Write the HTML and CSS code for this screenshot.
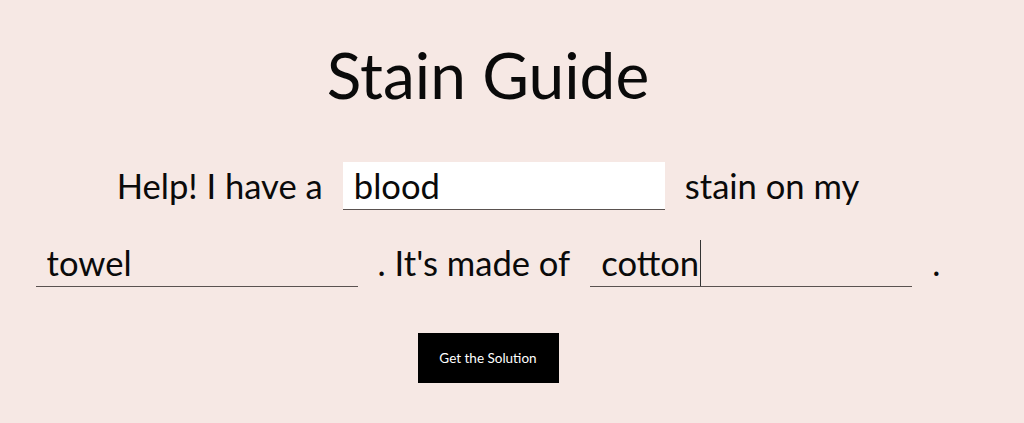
FILE: index.html
```html
<!DOCTYPE html>
<html lang="en">
<head>
<meta charset="utf-8">
<title>Stain Guide</title>
<link rel="stylesheet" href="styles.css">
</head>
<body>
<main class="page">
  <h1 class="title">Stain Guide</h1>
  <form class="sentence">
    <div class="row">
      <span class="words">Help! I have a</span>
      <input class="field field-filled" type="text" value="blood">
      <span class="words">stain on my</span>
    </div>
    <div class="row">
      <input class="field" type="text" value="towel">
      <span class="words">. It's made of</span>
      <span class="field-wrap">
        <input class="field" type="text" value="cotton">
        <span class="caret-mirror" aria-hidden="true"><span class="ghost">cotton</span><span class="caret"></span></span>
      </span>
      <span class="words">.</span>
    </div>
    <div class="actions">
      <button class="submit" type="button">Get the Solution</button>
    </div>
  </form>
</main>
</body>
</html>
```
FILE: styles.css
```css
html, body {
  margin: 0;
  padding: 0;
}
body {
  background: #f6e8e4;
  color: #0a0a0a;
  font-family: "Lato", "Noto Sans", sans-serif;
  height: 423px;
  overflow: hidden;
}
.page {
  width: 976px;
  padding-top: 35px;
}
.title {
  margin: 0;
  text-align: center;
  font-weight: 400;
  font-size: 64px;
  line-height: 80px;
}
.sentence {
  margin-top: 47px;
}
.row {
  display: flex;
  justify-content: center;
  align-items: baseline;
  gap: 20px;
  height: 48px;
  margin-bottom: 29px;
}
.words {
  font-size: 34.6px;
  line-height: 48px;
}
.field {
  box-sizing: border-box;
  width: 322px;
  height: 48px;
  margin: 0;
  padding: 0 0 0 11px;
  border: 0;
  border-bottom: 1px solid #5a5250;
  border-radius: 0;
  background: transparent;
  font-family: inherit;
  font-size: 34.6px;
  color: #0a0a0a;
  outline: none;
}
.field-filled {
  background: #ffffff;
}
.field-wrap {
  position: relative;
  display: inline-block;
}
.caret-mirror {
  position: absolute;
  left: 11px;
  top: 1px;
  height: 46px;
  display: flex;
  align-items: stretch;
  font-size: 34.6px;
  line-height: 46px;
  pointer-events: none;
}
.ghost {
  visibility: hidden;
  white-space: pre;
}
.caret {
  width: 1px;
  margin-left: 1px;
  background: #333;
}
.actions {
  display: flex;
  justify-content: center;
  margin-top: 46px;
}
.submit {
  width: 141px;
  height: 50px;
  border: 0;
  background: #000;
  color: #fff;
  font-family: inherit;
  font-size: 13.5px;
  cursor: pointer;
}
```
